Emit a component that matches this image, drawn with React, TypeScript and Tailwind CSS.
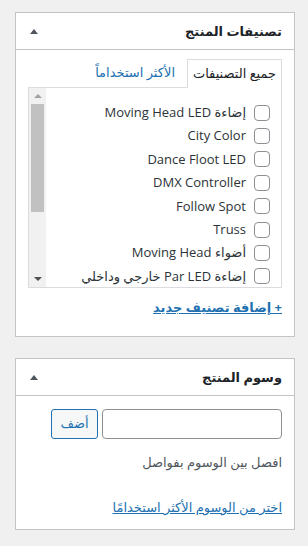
import React from "react";

const categories = [
  "إضاءة Moving Head LED",
  "City Color",
  "Dance Floot LED",
  "DMX Controller",
  "Follow Spot",
  "Truss",
  "أضواء Moving Head",
  "إضاءة Par LED خارجي وداخلي",
];

function Toggle() {
  return (
    <div className="w-[36px] h-full flex items-center justify-center">
      <div className="w-0 h-0 border-l-[4px] border-r-[4px] border-b-[5px] border-l-transparent border-r-transparent border-b-[#50575e]" />
    </div>
  );
}

function PanelHeader({ title }: { title: string }) {
  return (
    <div className="h-[37px] border-b border-[#c3c4c7] flex items-center justify-between pr-[12px]">
      <h2 className="text-[13px] font-bold text-[#1d2327] leading-none">{title}</h2>
      <Toggle />
    </div>
  );
}

function Checkbox() {
  return <span className="w-[16px] h-[16px] shrink-0 rounded-[4px] border border-[#8c8f94] bg-white" />;
}

function Scrollbar() {
  return (
    <div className="w-[17px] shrink-0 bg-[#f1f1f1] flex flex-col items-center">
      <div className="h-[16px] w-full flex items-center justify-center">
        <div className="w-0 h-0 border-l-[4px] border-r-[4px] border-b-[4px] border-l-transparent border-r-transparent border-b-[#a3a3a3]" />
      </div>
      <div className="w-[13px] h-[108px] bg-[#c1c1c1]" />
      <div className="flex-1" />
      <div className="h-[16px] w-full flex items-center justify-center">
        <div className="w-0 h-0 border-l-[4px] border-r-[4px] border-t-[4px] border-l-transparent border-r-transparent border-t-[#505050]" />
      </div>
    </div>
  );
}

export default function App() {
  return (
    <div
      dir="rtl"
      className="min-h-screen bg-[#f0f0f1] pt-[12px] text-[13px]"
      style={{ fontFamily: '"Open Sans", "DejaVu Sans", sans-serif' }}
    >
      {/* Product categories */}
      <div className="mr-[13px] w-[280px] border border-[#c3c4c7] bg-white">
        <PanelHeader title="تصنيفات المنتج" />
        <div className="px-[12px] pt-[9px] pb-[19px]">
          <div className="flex items-end h-[28px]">
            <div className="w-[95px] h-[29px] -mb-px z-10 bg-white border border-b-0 border-[#dcdcde] flex items-center justify-center text-[#1d2327]">
              جميع التصنيفات
            </div>
            <div className="h-[28px] mr-[12px] flex items-center text-[#2271b1]">الأكثر استخداماً</div>
          </div>
          <div className="h-[201px] border border-[#dcdcde] flex overflow-hidden">
            <ul className="flex-1 pt-[13px] pr-[11px]">
              {categories.map((c) => (
                <li key={c} className="h-[23.4px] flex items-center gap-[8px] text-[#2c3338] whitespace-nowrap">
                  <Checkbox />
                  <span>{c}</span>
                </li>
              ))}
            </ul>
            <Scrollbar />
          </div>
          <a href="#" className="block mt-[9px] leading-[20px] font-bold text-[#2271b1] underline">
            + إضافة تصنيف جديد
          </a>
        </div>
      </div>

      {/* Product tags */}
      <div className="mt-[21px] mr-[13px] w-[280px] border border-[#c3c4c7] bg-white">
        <PanelHeader title="وسوم المنتج" />
        <div className="px-[12px] pt-[13px] pb-[12px]">
          <div className="flex gap-[4px]">
            <div className="w-[180px] h-[30px] rounded-[4px] border border-[#8c8f94] bg-white" />
            <button className="w-[47px] h-[30px] rounded-[3px] border border-[#2271b1] bg-[#f6f7f7] text-[#2271b1]">
              أضف
            </button>
          </div>
          <p className="mt-[13px] leading-[20px] text-[#50575e]">افصل بين الوسوم بفواصل</p>
          <a href="#" className="block mt-[25px] leading-[20px] text-[#2271b1] underline">
            اختر من الوسوم الأكثر استخدامًا
          </a>
        </div>
      </div>
    </div>
  );
}
